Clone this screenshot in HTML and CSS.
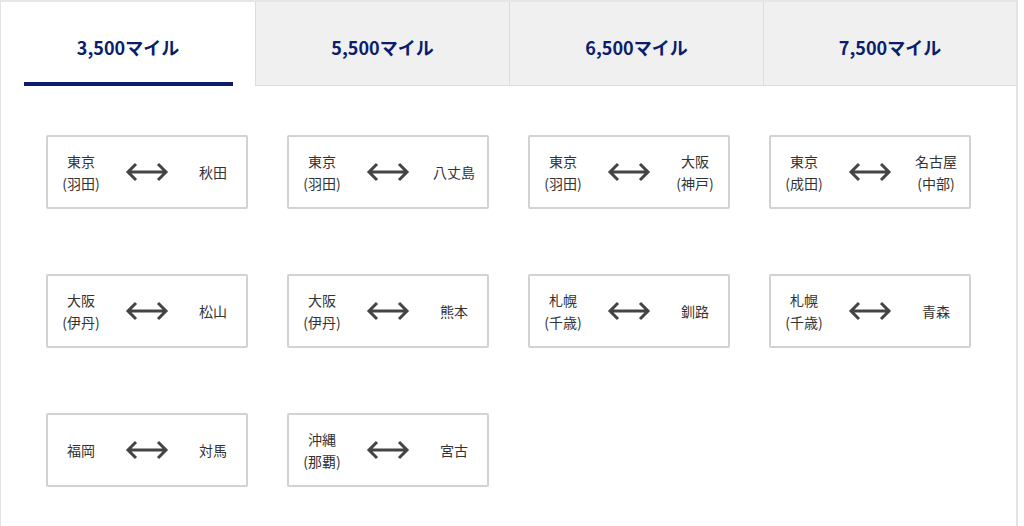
FILE: index.html
```html
<!DOCTYPE html>
<html lang="ja">
<head>
  <meta charset="UTF-8">
  <meta name="viewport" content="width=device-width, initial-scale=1.0">
  <title>必要マイル数</title>
  <link rel="stylesheet" href="styles.css">
</head>
<body>
  <div class="panel">
    <ul class="tabs">
      <li class="tab active">3,500マイル</li>
      <li class="tab">5,500マイル</li>
      <li class="tab">6,500マイル</li>
      <li class="tab">7,500マイル</li>
    </ul>

    <div class="routes">
      <div class="route">
        <div class="city">東京<br>(羽田)</div>
        <svg class="arrow" viewBox="0 0 44 22"><path d="M3 11H41M11 3L3 11L11 19M33 3L41 11L33 19"/></svg>
        <div class="city">秋田</div>
      </div>
      <div class="route">
        <div class="city">東京<br>(羽田)</div>
        <svg class="arrow" viewBox="0 0 44 22"><path d="M3 11H41M11 3L3 11L11 19M33 3L41 11L33 19"/></svg>
        <div class="city">八丈島</div>
      </div>
      <div class="route">
        <div class="city">東京<br>(羽田)</div>
        <svg class="arrow" viewBox="0 0 44 22"><path d="M3 11H41M11 3L3 11L11 19M33 3L41 11L33 19"/></svg>
        <div class="city">大阪<br>(神戸)</div>
      </div>
      <div class="route">
        <div class="city">東京<br>(成田)</div>
        <svg class="arrow" viewBox="0 0 44 22"><path d="M3 11H41M11 3L3 11L11 19M33 3L41 11L33 19"/></svg>
        <div class="city">名古屋<br>(中部)</div>
      </div>

      <div class="route">
        <div class="city">大阪<br>(伊丹)</div>
        <svg class="arrow" viewBox="0 0 44 22"><path d="M3 11H41M11 3L3 11L11 19M33 3L41 11L33 19"/></svg>
        <div class="city">松山</div>
      </div>
      <div class="route">
        <div class="city">大阪<br>(伊丹)</div>
        <svg class="arrow" viewBox="0 0 44 22"><path d="M3 11H41M11 3L3 11L11 19M33 3L41 11L33 19"/></svg>
        <div class="city">熊本</div>
      </div>
      <div class="route">
        <div class="city">札幌<br>(千歳)</div>
        <svg class="arrow" viewBox="0 0 44 22"><path d="M3 11H41M11 3L3 11L11 19M33 3L41 11L33 19"/></svg>
        <div class="city">釧路</div>
      </div>
      <div class="route">
        <div class="city">札幌<br>(千歳)</div>
        <svg class="arrow" viewBox="0 0 44 22"><path d="M3 11H41M11 3L3 11L11 19M33 3L41 11L33 19"/></svg>
        <div class="city">青森</div>
      </div>

      <div class="route">
        <div class="city">福岡</div>
        <svg class="arrow" viewBox="0 0 44 22"><path d="M3 11H41M11 3L3 11L11 19M33 3L41 11L33 19"/></svg>
        <div class="city">対馬</div>
      </div>
      <div class="route">
        <div class="city">沖縄<br>(那覇)</div>
        <svg class="arrow" viewBox="0 0 44 22"><path d="M3 11H41M11 3L3 11L11 19M33 3L41 11L33 19"/></svg>
        <div class="city">宮古</div>
      </div>
    </div>
  </div>
</body>
</html>
```

FILE: styles.css
```css
body {
  margin: 0;
  font-family: "Noto Sans CJK JP", "Noto Sans", sans-serif;
  background: white;
  color: #333;
}
.panel {
  width: 1015px;
  min-height: 524px;
  border-top: 2px solid #e6e6e6;
  border-left: 1px solid #e3e3e3;
  border-right: 2px solid #e3e3e3;
}
.tabs {
  display: flex;
  margin: 0;
  padding: 0;
  list-style: none;
}
.tab {
  width: 254px;
  height: 84px;
  display: flex;
  align-items: center;
  justify-content: center;
  padding-top: 7px;
  box-sizing: border-box;
  background: #f0f0f0;
  border-left: 1px solid #dcdcdc;
  border-bottom: 1px solid #dcdcdc;
  color: #0b1d6b;
  font-size: 18px;
  font-weight: bold;
  position: relative;
}
.tab:last-child {
  width: 253px;
}
.tab.active {
  background: white;
  border-left: none;
  border-bottom: 1px solid white;
}
.tab.active::after {
  content: "";
  position: absolute;
  left: 23px;
  right: 22px;
  bottom: -1px;
  height: 4px;
  background: #0b1d6b;
}
.routes {
  display: grid;
  grid-template-columns: repeat(4, 202px);
  column-gap: 39px;
  row-gap: 65px;
  padding: 49px 0 38px 45px;
}
.route {
  height: 74px;
  box-sizing: border-box;
  border: 2px solid #d2d2d2;
  border-radius: 2px;
  display: grid;
  grid-template-columns: 50px 1fr 50px;
  align-items: center;
  padding: 0 8px;
}
.city {
  text-align: center;
  font-size: 14px;
  line-height: 22px;
  white-space: nowrap;
}
.arrow {
  justify-self: center;
  width: 44px;
  height: 22px;
  fill: none;
  stroke: #444;
  stroke-width: 3;
}
```
